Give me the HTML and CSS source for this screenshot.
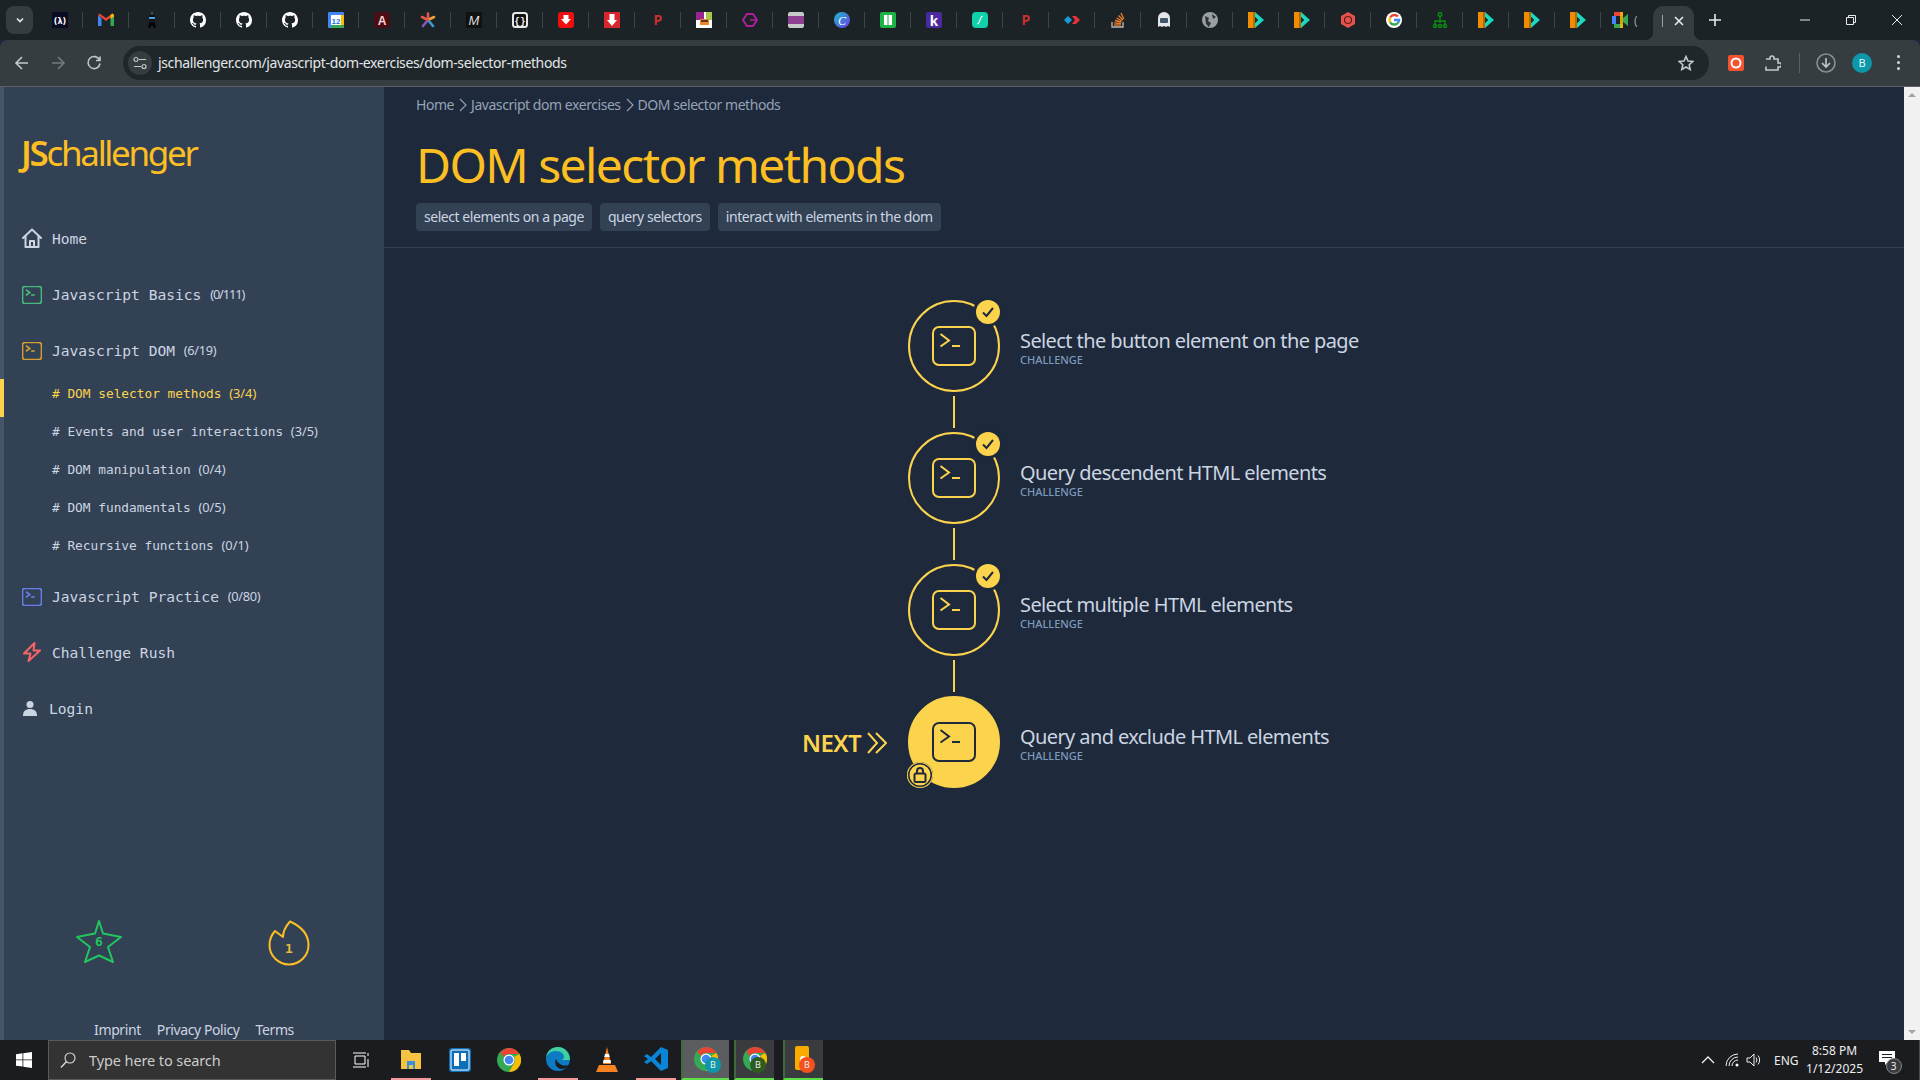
FILE: index.html
```html
<!DOCTYPE html>
<html>
<head>
  <meta charset="UTF-8">
  <title>DOM selector methods</title>
  <link rel="stylesheet" href="styles.css">
</head>
<body>
  <svg class="defs" width="0" height="0">
    <symbol id="term" viewBox="0 0 44 40">
      <rect x="1" y="1" width="42" height="38" rx="6" fill="none"/>
      <polyline points="8.5,8 17,14.5 8.5,20.5" fill="none"/>
      <line x1="20" y1="20" x2="28" y2="20"/>
    </symbol>
    <symbol id="gh" viewBox="0 0 16 16">
      <path fill="#fff" d="M8 0C3.58 0 0 3.58 0 8c0 3.54 2.29 6.53 5.47 7.59.4.07.55-.17.55-.38 0-.19-.01-.82-.01-1.49-2.01.37-2.53-.49-2.69-.94-.09-.23-.48-.94-.82-1.13-.28-.15-.68-.52-.01-.53.63-.01 1.08.58 1.23.82.72 1.21 1.87.87 2.33.66.07-.52.28-.87.51-1.07-1.78-.2-3.64-.89-3.64-3.95 0-.87.31-1.59.82-2.15-.08-.2-.36-1.02.08-2.12 0 0 .67-.21 2.2.82.64-.18 1.32-.27 2-.27s1.36.09 2 .27c1.53-1.04 2.2-.82 2.2-.82.44 1.1.16 1.92.08 2.12.51.56.82 1.27.82 2.15 0 3.07-1.87 3.75-3.65 3.95.29.25.54.73.54 1.48 0 1.07-.01 1.93-.01 2.2 0 .21.15.46.55.38A8.01 8.01 0 0 0 16 8c0-4.42-3.58-8-8-8z"/>
    </symbol>
    <symbol id="play" viewBox="0 0 16 16">
      <rect x="0" y="0" width="7" height="16" fill="#f08c00"/>
      <rect x="5" y="0" width="2" height="16" fill="#b86a00"/>
      <polygon points="7,0 16,8 7,16 7,11 10,8 7,5" fill="#1fd6c0"/>
      <polygon points="7,5 10,8 7,11" fill="#12302f"/>
    </symbol>
    <symbol id="arrow" viewBox="0 0 16 16">
      <rect width="16" height="16" rx="3" fill="#ee0f0f"/>
      <polygon points="5.5,3 10.5,3 10.5,7 13,7 8,12.5 3,7 5.5,7" fill="#fff"/>
    </symbol>
    <symbol id="chev" viewBox="0 0 8 14">
      <polyline points="1,1 7,7 1,13" fill="none" stroke="#94a3b8" stroke-width="1.1"/>
    </symbol>
  </svg>

  <div class="tabstrip">
    <div class="tabsearch"><svg width="12" height="12" viewBox="0 0 12 12"><polyline points="3,4.5 6,7.5 9,4.5" class="ln"/></svg></div>
    <div class="favs">
      <span class="fav"><svg width="16" height="16"><rect width="16" height="16" fill="#0a0a23"/><text x="8" y="12" text-anchor="middle" class="fav-t">(λ)</text></svg></span>
      <span class="fav"><svg width="16" height="16" viewBox="0 0 16 16"><path d="M0 3v11h3.5V6.5z" fill="#4285f4"/><path d="M16 3v11h-3.5V6.5z" fill="#34a853"/><path d="M0 3l8 6 8-6-1.5-1.5L8 6 1.5 1.500z" fill="#ea4335"/><path d="M12.5 3v4L16 4.5V3l-1.5-1.5z" fill="#fbbc04"/></svg></span>
      <span class="fav"><svg width="16" height="16" viewBox="0 0 16 16"><line x1="8" y1="0" x2="8" y2="3" stroke="#777"/><circle cx="8" cy="6" r="3.5" fill="#111"/><rect x="5" y="5" width="6" height="2" fill="#4aa3e0"/><path d="M5 10h6l1 6h-2l-2-3-2 3H4z" fill="#050505"/></svg></span>
      <span class="fav"><svg width="16" height="16"><use href="#gh"/></svg></span>
      <span class="fav"><svg width="16" height="16"><use href="#gh"/></svg></span>
      <span class="fav"><svg width="16" height="16"><use href="#gh"/></svg></span>
      <span class="fav"><svg width="16" height="16" viewBox="0 0 16 16"><rect width="16" height="16" rx="1" fill="#4285f4"/><rect x="3" y="3" width="10" height="10" fill="#fff"/><rect x="13" y="3" width="3" height="10" fill="#fbbc04"/><rect x="3" y="13" width="13" height="3" fill="#34a853"/><text x="8" y="11.5" text-anchor="middle" class="fav-cal">12</text></svg></span>
      <span class="fav"><svg width="16" height="16"><rect width="16" height="16" rx="3" fill="#4a0d14"/><text x="8" y="13" text-anchor="middle" class="fav-a">A</text></svg></span>
      <span class="fav"><svg width="16" height="16" viewBox="0 0 16 16" stroke-width="2.6" stroke-linecap="round"><line x1="8" y1="1.5" x2="8" y2="8" stroke="#e2574c"/><line x1="8" y1="8" x2="14" y2="5" stroke="#f0a030"/><line x1="8" y1="8" x2="13" y2="14" stroke="#3b9ed0"/><line x1="8" y1="8" x2="3" y2="14" stroke="#7c5cc4"/><line x1="8" y1="8" x2="2" y2="5" stroke="#e2574c"/></svg></span>
      <span class="fav"><svg width="16" height="16"><rect width="16" height="16" rx="1" fill="#111"/><text x="8" y="13" text-anchor="middle" class="fav-m">M</text></svg></span>
      <span class="fav"><svg width="16" height="16"><rect x="1" y="1" width="14" height="14" rx="2.5" fill="#111" stroke="#e8e8e8" stroke-width="2"/><text x="8" y="11.5" text-anchor="middle" class="fav-b">{}</text></svg></span>
      <span class="fav"><svg width="16" height="16" viewBox="0 0 16 16"><use href="#arrow"/></svg></span>
      <span class="fav"><svg width="16" height="16" viewBox="0 0 16 16"><rect width="16" height="16" fill="#d8262c"/><polygon points="5.5,2 10.5,2 10.5,8 13,8 8,14 3,8 5.5,8" fill="#fff"/></svg></span>
      <span class="fav"><svg width="16" height="16"><text x="8" y="13" text-anchor="middle" class="fav-p">P</text></svg></span>
      <span class="fav"><svg width="16" height="16" viewBox="0 0 16 16"><rect width="16" height="16" fill="#fff"/><rect x="0" y="0" width="8" height="8" fill="#98268f"/><rect x="10" y="0" width="6" height="8" fill="#a6c94b"/><rect x="4" y="7" width="9" height="6" fill="#f0872c"/><rect x="5" y="8" width="7" height="2" fill="#5c3a21"/></svg></span>
      <span class="fav"><svg width="16" height="16" viewBox="0 0 16 16"><polygon points="5,2 11,2 15,8 11,14 5,14 1,8" fill="none" stroke="#b01e9a" stroke-width="2"/><line x1="8" y1="8" x2="15" y2="8" stroke="#b01e9a" stroke-width="1.5"/></svg></span>
      <span class="fav"><svg width="16" height="16" viewBox="0 0 16 16"><rect width="16" height="16" rx="2" fill="#c8c8c8"/><rect y="4" width="16" height="8" fill="#8e3f92"/></svg></span>
      <span class="fav"><svg width="16" height="16" viewBox="0 0 16 16"><defs><linearGradient id="cv" x1="0" y1="0" x2="1" y2="1"><stop offset="0" stop-color="#16c1d0"/><stop offset="1" stop-color="#6c3be4"/></linearGradient></defs><circle cx="8" cy="8" r="8" fill="url(#cv)"/><text x="8" y="12.5" text-anchor="middle" class="fav-c">C</text></svg></span>
      <span class="fav"><svg width="16" height="16" viewBox="0 0 16 16"><rect width="16" height="16" rx="2" fill="#1db446"/><rect x="4" y="3" width="8" height="10" fill="#fff"/><line x1="8" y1="3" x2="8" y2="13" stroke="#1db446"/></svg></span>
      <span class="fav"><svg width="16" height="16"><rect width="16" height="16" rx="2" fill="#4a2aa0"/><text x="8" y="13.5" text-anchor="middle" class="fav-k">k</text></svg></span>
      <span class="fav"><svg width="16" height="16" viewBox="0 0 16 16"><rect width="16" height="16" rx="4" fill="#0fd1ac"/><path d="M5 12c2 0 2-1.500 3-4s1-4 3-4" fill="none" stroke="#fff" stroke-width="1.200"/></svg></span>
      <span class="fav"><svg width="16" height="16"><text x="8" y="13" text-anchor="middle" class="fav-p">P</text></svg></span>
      <span class="fav"><svg width="16" height="16" viewBox="0 0 16 16"><polygon points="0,8 4,4 8,8 4,12" fill="#1a9ad6"/><polygon points="4,4 8,4 12,4 16,8 12,12 8,12 11,8 8,4" fill="#e8303a"/></svg></span>
      <span class="fav"><svg width="16" height="16" viewBox="0 0 16 16" fill="none"><path d="M2 10v5h11v-5" stroke="#bcbbbb" stroke-width="1.300"/><g stroke="#f48024" stroke-width="1.300"><line x1="4" y1="13" x2="11" y2="13"/><line x1="4.200" y1="10.800" x2="11" y2="11.500"/><line x1="5" y1="8.500" x2="11.300" y2="10"/><line x1="6.500" y1="6" x2="12" y2="9"/><line x1="8.500" y1="3.500" x2="13" y2="8"/><line x1="11" y1="1" x2="13.800" y2="7"/></g></svg></span>
      <span class="fav"><svg width="16" height="16" viewBox="0 0 16 16"><path d="M2 15V6a6 6 0 0 1 12 0v9l-2-1-2 1-2-1-2 1-2-1z" fill="#e6e6e6"/><rect x="4" y="6" width="8" height="5" rx="1" fill="#44566c"/></svg></span>
      <span class="fav"><svg width="16" height="16" viewBox="0 0 16 16"><circle cx="8" cy="8" r="8" fill="#9a9fa3"/><path d="M3 4l4 2-1 3 3 2-2 4-3-3zM10 2l4 3-3 2z" fill="#2c3438"/></svg></span>
      <span class="fav"><svg width="16" height="16"><use href="#play"/></svg></span>
      <span class="fav"><svg width="16" height="16"><use href="#play"/></svg></span>
      <span class="fav"><svg width="16" height="16" viewBox="0 0 16 16"><polygon points="8,0 15,4 15,12 8,16 1,12 1,4" fill="#e5534b"/><circle cx="8" cy="8" r="3.500" fill="none" stroke="#5c1d1a" stroke-width="1.200"/></svg></span>
      <span class="fav"><svg width="16" height="16" viewBox="0 0 16 16"><circle cx="8" cy="8" r="8" fill="#fff"/><g fill="none" stroke-width="2.400"><path d="M12 4.400A5 5 0 0 0 4.200 5.500" stroke="#ea4335"/><path d="M4.200 5.500a5 5 0 0 0 0 5" stroke="#fbbc04"/><path d="M4.200 10.500A5 5 0 0 0 12.600 10" stroke="#34a853"/><path d="M12.600 10c.3-.6.4-1.300.4-2H8" stroke="#4285f4"/></g></svg></span>
      <span class="fav"><svg width="16" height="16" viewBox="0 0 16 16" fill="none" stroke="#0c8a12" stroke-width="1.500"><circle cx="8" cy="2.500" r="1.800"/><line x1="8" y1="4" x2="8" y2="11"/><path d="M3 13V9h10v4"/><circle cx="3" cy="14" r="1.500"/><circle cx="13" cy="14" r="1.500"/><circle cx="8" cy="14" r="1.500"/></svg></span>
      <span class="fav"><svg width="16" height="16"><use href="#play"/></svg></span>
      <span class="fav"><svg width="16" height="16"><use href="#play"/></svg></span>
      <span class="fav"><svg width="16" height="16"><use href="#play"/></svg></span>
    </div>
    <div class="meet">
      <svg width="16" height="16" viewBox="0 0 16 16"><rect x="0" y="4" width="4" height="8" fill="#4285f4"/><rect x="2" y="0" width="9" height="4" fill="#ea4335"/><rect x="2" y="12" width="9" height="4" fill="#34a853"/><rect x="8" y="0" width="3" height="16" fill="#fbbc04" opacity=".85"/><polygon points="11,6 16,2 16,14 11,10" fill="#34a853"/></svg>
      <span class="meet-cut">(</span>
    </div>
    <div class="tab-active">
      <span class="tab-bar"></span>
      <svg width="12" height="12" viewBox="0 0 12 12"><path d="M2 2l8 8M10 2l-8 8" class="ln"/></svg>
    </div>
    <div class="newtab"><svg width="14" height="14" viewBox="0 0 14 14"><path d="M7 1v12M1 7h12" class="ln"/></svg></div>
    <div class="winctl">
      <span><svg width="10" height="10" viewBox="0 0 10 10"><line x1="0" y1="5" x2="10" y2="5" class="ln1"/></svg></span>
      <span><svg width="10" height="10" viewBox="0 0 10 10"><path d="M.5 2.500h7v7h-7zM2.500 2.500v-2h7v7h-2" class="ln1"/></svg></span>
      <span><svg width="10" height="10" viewBox="0 0 10 10"><path d="M0 0l10 10M10 0L0 10" class="ln1"/></svg></span>
    </div>
  </div>

  <div class="toolbar">
    <svg class="navbtn" width="16" height="16" viewBox="0 0 16 16"><path d="M14 8H2.500M8 2L2 8l6 6" class="ln2"/></svg>
    <svg class="navbtn dim" width="16" height="16" viewBox="0 0 16 16"><path d="M2 8h11.500M8 2l6 6-6 6" class="ln2"/></svg>
    <svg class="navbtn" width="16" height="16" viewBox="0 0 16 16"><path d="M13.500 5A6 6 0 1 0 14 8.500M14 1.500V5.500H10" class="ln2"/></svg>
    <div class="omnibox">
      <span class="siteinfo"><svg width="14" height="14" viewBox="0 0 14 14"><path d="M6 3.500h7M1 10.500h7" class="ln2"/><circle cx="3" cy="3.500" r="2" class="ln2"/><circle cx="11" cy="10.500" r="2" class="ln2"/></svg></span>
      <span class="url">jschallenger.com/javascript-dom-exercises/dom-selector-methods</span>
      <svg class="urlstar" width="16" height="16" viewBox="0 0 16 16"><polygon points="8,1.500 10,6 14.800,6.500 11.200,9.700 12.200,14.500 8,12 3.800,14.500 4.800,9.700 1.200,6.500 6,6" class="ln2"/></svg>
    </div>
    <svg class="ext ext-rec" width="16" height="16" viewBox="0 0 16 16"><rect width="16" height="16" rx="2" fill="#f4512c"/><circle cx="8" cy="8" r="4.500" fill="none" stroke="#fff" stroke-width="2"/></svg>
    <svg class="ext ext-puzzle" width="16" height="16" viewBox="0 0 16 16"><path d="M1 4h4V3a2 2 0 0 1 4 0v1h4v4h1.500a2 2 0 0 1 0 4H13v3H1v-3.500" class="ln2"/></svg>
    <span class="tool-sep"></span>
    <svg class="ext ext-down" width="20" height="20" viewBox="0 0 20 20"><circle cx="10" cy="10" r="9" class="ln3"/><path d="M10 5v9M6 10l4 4 4-4" class="ln2"/></svg>
    <span class="avatar">B</span>
    <span class="dots"><i></i><i></i><i></i></span>
  </div>

  <div class="page">
    <aside class="sidebar">
      <a class="logo"><b>JS</b>challenger</a>
      <nav class="nav">
        <a class="nav-item"><svg class="nav-ico" width="20" height="20" viewBox="0 0 20 20"><path d="M1 10L10 1.500 19 10M3.500 8v11h13V8M8 19v-6h4v6" class="home-ln"/></svg>Home</a>
        <a class="nav-item"><svg class="nav-ico term green" width="20" height="18"><use href="#term"/></svg>Javascript Basics <span class="count tight">(0/111)</span></a>
        <a class="nav-item"><svg class="nav-ico term amber" width="20" height="18"><use href="#term"/></svg>Javascript DOM <span class="count">(6/19)</span></a>
        <a class="sub-item active"># DOM selector methods <span class="count">(3/4)</span></a>
        <a class="sub-item"># Events and user interactions <span class="count">(3/5)</span></a>
        <a class="sub-item"># DOM manipulation <span class="count">(0/4)</span></a>
        <a class="sub-item"># DOM fundamentals <span class="count">(0/5)</span></a>
        <a class="sub-item"># Recursive functions <span class="count">(0/1)</span></a>
        <a class="nav-item"><svg class="nav-ico term indigo" width="20" height="18"><use href="#term"/></svg>Javascript Practice <span class="count">(0/80)</span></a>
        <a class="nav-item"><svg class="nav-ico" width="20" height="20" viewBox="0 0 20 20"><path d="M12.500 1L2 11.500h6.500L6.500 19 18 8.500h-6.500z" class="bolt-ln"/></svg>Challenge Rush</a>
        <a class="nav-item login"><svg class="login-ico" width="14" height="15" viewBox="0 0 14 15"><circle cx="7" cy="3.500" r="3.500" fill="#cbd5e1"/><path d="M0 15c0-5 2.500-7 7-7s7 2 7 7z" fill="#cbd5e1"/></svg>Login</a>
      </nav>
      <div class="scores">
        <svg class="score-star" width="46" height="45" viewBox="0 0 46 45"><polygon points="23,2 27,14.500 45,18 32,28 37,43 23,36.500 9,43 14,28 1,18 19,14.500" class="star-ln"/><text x="23" y="27" text-anchor="middle" class="star-num">6</text></svg>
        <svg class="score-flame" width="42" height="46" viewBox="0 0 42 46"><path d="M22 1.500C32 6 40.500 14 40.500 25A19.500 19.500 0 0 1 1.500 25C1.500 19 3.500 15 7 11L15 17C15 11 18 6 22 1.500Z" class="flame-ln"/><text x="21" y="33" text-anchor="middle" class="flame-num">1</text></svg>
      </div>
      <div class="legal"><a>Imprint</a><a>Privacy Policy</a><a>Terms</a></div>
    </aside>

    <main class="main">
      <header class="head">
        <div class="crumbs">Home<svg class="sep" width="8" height="14"><use href="#chev"/></svg>Javascript dom exercises<svg class="sep" width="8" height="14"><use href="#chev"/></svg>DOM selector methods</div>
        <h1 class="title">DOM selector methods</h1>
        <div class="tags">
          <span class="tag">select elements on a page</span>
          <span class="tag">query selectors</span>
          <span class="tag">interact with elements in the dom</span>
        </div>
      </header>

      <section class="steps">
        <div class="step">
          <div class="node"><svg class="term" width="44" height="40"><use href="#term"/></svg><span class="check"><svg width="14" height="14" viewBox="0 0 14 14"><polyline points="2,7.500 5.500,11 12,3" class="check-ln"/></svg></span></div>
          <div class="step-text"><div class="step-title">Select the button element on the page</div><div class="step-kind">CHALLENGE</div></div>
        </div>
        <div class="link"></div>
        <div class="step">
          <div class="node"><svg class="term" width="44" height="40"><use href="#term"/></svg><span class="check"><svg width="14" height="14" viewBox="0 0 14 14"><polyline points="2,7.500 5.500,11 12,3" class="check-ln"/></svg></span></div>
          <div class="step-text"><div class="step-title">Query descendent HTML elements</div><div class="step-kind">CHALLENGE</div></div>
        </div>
        <div class="link"></div>
        <div class="step">
          <div class="node"><svg class="term" width="44" height="40"><use href="#term"/></svg><span class="check"><svg width="14" height="14" viewBox="0 0 14 14"><polyline points="2,7.500 5.500,11 12,3" class="check-ln"/></svg></span></div>
          <div class="step-text"><div class="step-title">Select multiple HTML elements</div><div class="step-kind">CHALLENGE</div></div>
        </div>
        <div class="link"></div>
        <div class="step">
          <div class="node current">
            <span class="next">NEXT<svg width="20" height="22" viewBox="0 0 20 22"><path d="M1 1l9 10-9 10M9 1l10 10-10 10" class="next-ln"/></svg></span>
            <svg class="term" width="44" height="40"><use href="#term"/></svg>
            <span class="lock"><svg width="14" height="16" viewBox="0 0 14 16"><rect x="1.500" y="6.500" width="11" height="8.500" rx="1.500" class="lock-ln"/><path d="M4 6.500V4a3 3 0 0 1 6 0v2.500" class="lock-ln"/></svg></span>
          </div>
          <div class="step-text"><div class="step-title">Query and exclude HTML elements</div><div class="step-kind">CHALLENGE</div></div>
        </div>
      </section>
    </main>

    <div class="scrollbar">
      <svg width="16" height="16" viewBox="0 0 16 16"><polygon points="8,6 12,10 4,10" fill="#a3a3a3"/></svg>
      <svg width="16" height="16" viewBox="0 0 16 16"><polygon points="8,10 12,6 4,6" fill="#a3a3a3"/></svg>
    </div>
  </div>

  <div class="taskbar">
    <div class="start"><svg width="16" height="16" viewBox="0 0 16 16"><path d="M0 2.200l6.500-.9v6.200H0zM7.300 1.200L16 0v7.500H7.300zM0 8.300h6.500v6.300L0 13.700zM7.300 8.300H16V16l-8.700-1.200z" fill="#fff"/></svg></div>
    <div class="search"><svg width="16" height="16" viewBox="0 0 16 16"><circle cx="10" cy="6" r="5" fill="none" stroke="#ddd" stroke-width="1.100"/><line x1="6.500" y1="9.500" x2="1" y2="15.500" stroke="#ddd" stroke-width="1.300"/></svg><span>Type here to search</span></div>
    <div class="taskview"><svg width="16" height="16" viewBox="0 0 16 16"><path d="M2 4h10v8H2zM0 1h13M0 15h13M15 1v3M15 7v8" fill="none" stroke="#fff"/></svg></div>
    <div class="apps">
      <span class="app u-pink"><svg width="24" height="24" viewBox="0 0 24 24"><path d="M2 3h8l2 3h10v16H2z" fill="#f5c242"/><rect x="8" y="14" width="8" height="8" fill="#3a8fd9"/><rect x="10" y="18" width="4" height="4" fill="#f5c242"/></svg></span>
      <span class="app"><svg width="22" height="24" viewBox="0 0 22 24"><rect width="22" height="24" rx="3" fill="#0a6fb8"/><rect x="2" y="2" width="18" height="20" rx="1" fill="#0a6fb8" stroke="#fff"/><rect x="5" y="5" width="5" height="13" fill="#fff"/><rect x="12" y="5" width="5" height="8" fill="#fff"/></svg></span>
      <span class="app"><svg class="chrome-ic" width="24" height="24" viewBox="0 0 24 24"><circle cx="12" cy="12" r="12" fill="#34a853"/><path d="M12 0a12 12 0 0 1 10.400 6H12a6 6 0 0 0-5.200 3L3.400 4.500A12 12 0 0 1 12 0z" fill="#ea4335"/><path d="M22.400 6A12 12 0 0 1 12 24l5.200-9a6 6 0 0 0 0-6z" fill="#fbbc04"/><circle cx="12" cy="12" r="5.500" fill="#fff"/><circle cx="12" cy="12" r="4.300" fill="#4285f4"/></svg></span>
      <span class="app u-pink"><svg width="24" height="24" viewBox="0 0 24 24"><circle cx="12" cy="12" r="12" fill="#0c7bc4"/><path d="M24 13c0-7-5-13-12-13C6 0 1 4 0 10c2-4 6-6 10-6 5 0 8 3 8 6 0 2-2 3-3 3z" fill="#3dd0a0"/><path d="M10 12c-2 4 0 9 5 10 4 0 7-2 9-5-3 2-7 2-10 0-2-1-3-3-4-5z" fill="#1a1c20"/></svg></span>
      <span class="app"><svg width="22" height="26" viewBox="0 0 22 26"><polygon points="11,0 15,17 7,17" fill="#f58220"/><polygon points="9,7 13,7 13.800,10 8.200,10" fill="#fff"/><polygon points="7.500,13 14.500,13 15,16 7,16" fill="#fff"/><polygon points="3,18 19,18 22,25 0,25" fill="#f58220"/></svg></span>
      <span class="app u-pink"><svg width="24" height="24" viewBox="0 0 24 24"><path d="M17 0l7 3v18l-7 3L7 14l-4 3-3-2 4-3-4-3 3-2 4 3z" fill="#0a84d6"/><path d="M17 6v12l-6-6z" fill="#1a1c20"/></svg></span>
      <span class="app open hi"><svg class="chrome-ic" width="24" height="24" viewBox="0 0 24 24"><circle cx="12" cy="12" r="12" fill="#34a853"/><path d="M12 0a12 12 0 0 1 10.400 6H12a6 6 0 0 0-5.200 3L3.400 4.500A12 12 0 0 1 12 0z" fill="#ea4335"/><path d="M22.400 6A12 12 0 0 1 12 24l5.200-9a6 6 0 0 0 0-6z" fill="#fbbc04"/><circle cx="12" cy="12" r="5.500" fill="#fff"/><circle cx="12" cy="12" r="4.300" fill="#4285f4"/></svg><span class="appbadge teal">B</span></span>
      <span class="app open"><svg class="chrome-ic" width="24" height="24" viewBox="0 0 24 24"><circle cx="12" cy="12" r="12" fill="#34a853"/><path d="M12 0a12 12 0 0 1 10.400 6H12a6 6 0 0 0-5.200 3L3.400 4.500A12 12 0 0 1 12 0z" fill="#ea4335"/><path d="M22.400 6A12 12 0 0 1 12 24l5.200-9a6 6 0 0 0 0-6z" fill="#fbbc04"/><circle cx="12" cy="12" r="5.500" fill="#fff"/><circle cx="12" cy="12" r="4.300" fill="#4285f4"/></svg><span class="appbadge olive">B</span></span>
      <span class="app open last"><svg width="22" height="26" viewBox="0 0 22 26"><rect x="2" width="14" height="24" rx="2" fill="#f9ab00"/><circle cx="10" cy="13" r="3" fill="#fff"/></svg><span class="appbadge orange">B</span></span>
    </div>
    <div class="tray">
      <svg class="tray-caret" width="14" height="8" viewBox="0 0 14 8"><polyline points="1,7 7,1 13,7" class="tray-ln"/></svg>
      <svg class="tray-wifi" width="16" height="14" viewBox="0 0 16 14"><path d="M1 13A12 12 0 0 1 13 1M4 13a9 9 0 0 1 9-9M7 13a6 6 0 0 1 6-6" class="tray-thin"/><circle cx="12" cy="12" r="1.500" fill="#fff"/></svg>
      <svg class="tray-vol" width="16" height="14" viewBox="0 0 16 14"><path d="M1 5h3l4-4v12l-4-4H1zM10 4.500a4 4 0 0 1 0 5M12 2.500a7 7 0 0 1 0 9" class="tray-thin"/></svg>
      <span class="tray-lang">ENG</span>
      <div class="clock"><div>8:58 PM</div><div>1/12/2025</div></div>
      <div class="notif"><svg width="16" height="14" viewBox="0 0 16 14"><path d="M0 0h16v11H9l-3 3v-3H0z" fill="#fff"/><path d="M3 3.500h10M3 6.500h10" stroke="#1a1c20"/></svg><span class="notif-n">3</span></div>
    </div>
  </div>
</body>
</html>
```

FILE: styles.css
```css
* {
  box-sizing: border-box;
}

html, body {
  margin: 0;
  width: 1920px;
  height: 1080px;
  overflow: hidden;
}

body {
  display: flex;
  flex-direction: column;
  font-family: "Noto Sans", "Open Sans", sans-serif;
  background: #1e293b;
}

.defs {
  position: absolute;
}

svg {
  display: block;
  flex: none;
}

a {
  text-decoration: none;
}

.ln, .ln1, .ln2, .ln3 {
  fill: none;
  stroke: #e8eaec;
  stroke-width: 1.6;
}

.ln1 {
  stroke-width: 1;
}

.ln2 {
  stroke: #c4c8cb;
  stroke-width: 1.6;
}

.ln3 {
  stroke: #8a8f92;
  stroke-width: 1.6;
}

.fav-t { font: bold 8px "DejaVu Sans", sans-serif; fill: #fff; }
.fav-cal { font: bold 8px "Liberation Sans", sans-serif; fill: #1a73e8; }
.fav-a { font: bold 12px "Liberation Sans", sans-serif; fill: #f5d5d5; }
.fav-m { font: italic 13px "Liberation Sans", sans-serif; fill: #ddd; }
.fav-b { font: bold 9px "Liberation Mono", monospace; fill: #fff; }
.fav-c { font: italic 12px "Liberation Serif", serif; fill: #fff; }
.fav-k { font: bold 15px "Liberation Sans", sans-serif; fill: #fff; }
.fav-p { font: bold 14px "Liberation Mono", monospace; fill: #c9302c; }

/* browser chrome */
.tabstrip {
  height: 40px;
  flex: none;
  display: flex;
  align-items: center;
  background: #1b2327;
  color: #e8eaec;
}

.tabsearch {
  width: 27px;
  height: 28px;
  margin-left: 6px;
  margin-right: 4px;
  border-radius: 8px;
  background: #353d41;
  display: flex;
  align-items: center;
  justify-content: center;
}

.favs {
  display: flex;
}

.fav {
  width: 46px;
  height: 16px;
  padding-left: 15px;
  border-right: 1px solid #3c4448;
}

.meet {
  width: 52px;
  display: flex;
  align-items: center;
  gap: 6px;
  padding-left: 11px;
  font-size: 12px;
  color: #9aa0a3;
}

.tab-active {
  position: relative;
  align-self: flex-end;
  width: 41px;
  height: 34px;
  background: #353d41;
  border-radius: 10px 10px 0 0;
  display: flex;
  align-items: center;
  padding: 0 0 4px 9px;
  gap: 10px;
}

.tab-active::before,
.tab-active::after {
  content: "";
  position: absolute;
  bottom: 0;
  width: 8px;
  height: 8px;
}

.tab-active::before {
  left: -8px;
  background: radial-gradient(circle at 0 0, transparent 8px, #353d41 8.5px);
}

.tab-active::after {
  right: -8px;
  background: radial-gradient(circle at 100% 0, transparent 8px, #353d41 8.5px);
}

.tab-bar {
  width: 1px;
  height: 12px;
  background: #9aa0a3;
}

.newtab {
  margin-left: 14px;
}

.winctl {
  margin-left: auto;
  display: flex;
}

.winctl span {
  width: 46px;
  height: 30px;
  display: flex;
  align-items: center;
  justify-content: center;
}

.toolbar {
  height: 47px;
  flex: none;
  display: flex;
  align-items: center;
  padding: 0 0 1px 14px;
  background: #353d41;
  border-bottom: 1px solid #5b6164;
  border-radius: 8px 8px 0 0;
}

.navbtn {
  margin-right: 20px;
}

.navbtn.dim path {
  stroke: #747a7d;
}

.omnibox {
  width: 1586px;
  height: 34px;
  margin-left: 1px;
  border-radius: 17px;
  background: #1f272a;
  display: flex;
  align-items: center;
  padding-left: 5px;
}

.siteinfo {
  width: 24px;
  height: 24px;
  border-radius: 50%;
  background: #353d41;
  display: flex;
  align-items: center;
  justify-content: center;
}

.siteinfo .ln2 {
  stroke-width: 1.2;
}

.url {
  margin-left: 6px;
  font-size: 14px;
  letter-spacing: -0.37px;
  color: #e3e6e8;
}

.urlstar {
  margin-left: auto;
  margin-right: 15px;
}

.ext-rec {
  margin-left: 19px;
}

.ext-puzzle {
  margin-left: 21px;
}

.tool-sep {
  width: 1px;
  height: 20px;
  margin-left: 18px;
  background: #5b6164;
}

.ext-down {
  margin-left: 16px;
}

.avatar {
  width: 20px;
  height: 20px;
  margin-left: 16px;
  border-radius: 50%;
  background: #0e97a8;
  color: #dff;
  font-size: 11px;
  text-align: center;
  line-height: 20px;
}

.dots {
  margin-left: 25px;
  display: flex;
  flex-direction: column;
  gap: 3px;
}

.dots i {
  width: 3px;
  height: 3px;
  border-radius: 50%;
  background: #d4d7d9;
}

/* page */
.page {
  height: 953px;
  flex: none;
  display: flex;
  overflow: hidden;
}

.sidebar {
  width: 384px;
  flex: none;
  display: flex;
  flex-direction: column;
  background: #334155;
  border-left: 4px solid #475569;
}

.logo {
  height: 124px;
  padding: 42px 0 0 17px;
  font-size: 35px;
  line-height: 48px;
  letter-spacing: -2.3px;
  color: #fbbf24;
}

.logo b {
  font-weight: 600;
}

.nav {
  display: flex;
  flex-direction: column;
}

.nav-item {
  height: 56px;
  display: flex;
  align-items: center;
  padding: 0 0 2px 18px;
  font: 14.6px "DejaVu Sans Mono", monospace;
  color: #cbd5e1;
  white-space: pre;
}

.nav-ico {
  margin-right: 10px;
}

.nav-ico.term {
  margin-top: 2px;
}

.login-ico {
  margin: 0 12px 0 1px;
}

.term {
  stroke: currentColor;
  stroke-width: 2;
  color: #fcd34d;
}

.term.green { color: #48bb78; stroke-width: 3.6; }
.term.amber { color: #d69e2e; stroke-width: 3.6; }
.term.indigo { color: #667eea; stroke-width: 3.6; }

.home-ln {
  fill: none;
  stroke: #cbd5e1;
  stroke-width: 2;
  stroke-linejoin: round;
  stroke-linecap: round;
}

.bolt-ln {
  fill: none;
  stroke: #f56565;
  stroke-width: 2;
  stroke-linejoin: round;
}

.count {
  font: 12.8px "Noto Sans", sans-serif;
  letter-spacing: -0.3px;
}

.count.tight {
  letter-spacing: -1.1px;
}

.sub-item {
  height: 38px;
  padding: 5px 0 0 48px;
  font: 12.8px "DejaVu Sans Mono", monospace;
  line-height: 14px;
  color: #cbd5e1;
  white-space: pre;
}

.sub-item .count {
  letter-spacing: 0;
}

.sub-item.active {
  margin-left: -4px;
  padding-left: 48px;
  border-left: 4px solid #fcd34d;
  color: #fcd34d;
}

.scores {
  height: 46px;
  margin-top: 183px;
  position: relative;
  display: flex;
  padding-left: 72px;
  gap: 146px;
}

.score-star { margin-top: -1px; }

.star-ln {
  fill: none;
  stroke: #22c55e;
  stroke-width: 2;
  stroke-linejoin: round;
}

.star-num {
  font: bold 13px "DejaVu Sans Mono", monospace;
  fill: #22c55e;
}

.flame-ln {
  fill: none;
  stroke: #fbbf24;
  stroke-width: 2;
  stroke-linejoin: round;
}

.flame-num {
  font: bold 13px "DejaVu Sans Mono", monospace;
  fill: #e6b93a;
}

.legal {
  margin-top: auto;
  height: 20px;
  display: flex;
  justify-content: center;
  gap: 16px;
  font-size: 14px;
  line-height: 20px;
  letter-spacing: -0.4px;
  color: #cbd5e1;
}

.main {
  flex: 1;
  min-width: 0;
}

.head {
  height: 161px;
  padding: 8px 0 0 32px;
  border-bottom: 1px solid #334155;
}

.crumbs {
  display: flex;
  align-items: center;
  font-size: 14px;
  line-height: 20px;
  letter-spacing: -0.45px;
  color: #94a3b8;
}

.sep {
  margin: 0 4px 0 5px;
}

.title {
  margin: 18px 0 0;
  font-size: 48px;
  font-weight: 400;
  line-height: 64px;
  letter-spacing: -1.6px;
  color: #fbbf24;
}

.tags {
  display: flex;
  gap: 8px;
  margin-top: 6px;
}

.tag {
  height: 28px;
  padding: 0 8px;
  border-radius: 4px;
  background: #334155;
  color: #cbd5e1;
  font-size: 14px;
  line-height: 28px;
  letter-spacing: -0.45px;
}

.steps {
  padding: 52px 0 0 524px;
}

.step {
  display: flex;
  align-items: center;
  gap: 20px;
}

.node {
  position: relative;
  width: 92px;
  height: 92px;
  border: 2px solid #fcd34d;
  border-radius: 50%;
  display: flex;
  align-items: center;
  justify-content: center;
}

.node.current {
  background: #fcd34d;
}

.node.current .term {
  color: #1e293b;
}

.check {
  position: absolute;
  left: 66px;
  top: -2px;
  width: 24px;
  height: 24px;
  border-radius: 50%;
  background: #fcd34d;
  box-shadow: 0 0 0 3px #1e293b;
  display: flex;
  align-items: center;
  justify-content: center;
}

.check-ln {
  fill: none;
  stroke: #1e293b;
  stroke-width: 2;
}

.lock {
  position: absolute;
  left: -3px;
  top: 64px;
  width: 26px;
  height: 26px;
  border-radius: 50%;
  background: #fcd34d;
  box-shadow: inset 0 0 0 1px #fcd34d, inset 0 0 0 2.5px #1e293b;
  display: flex;
  align-items: center;
  justify-content: center;
}

.lock-ln {
  fill: none;
  stroke: #1e293b;
  stroke-width: 2;
}

.next {
  position: absolute;
  right: 111px;
  top: 29px;
  display: flex;
  align-items: center;
  gap: 6px;
  font-size: 24px;
  font-weight: 600;
  line-height: 32px;
  letter-spacing: -0.6px;
  color: #fcd34d;
}

.next-ln {
  fill: none;
  stroke: #fcd34d;
  stroke-width: 2;
}

.link {
  width: 2px;
  height: 32px;
  margin: 4px 0 4px 45px;
  background: #fcd34d;
}

.step-text {
  padding-top: 3px;
}

.step-title {
  font-size: 20px;
  line-height: 24px;
  letter-spacing: -0.6px;
  color: #cbd5e1;
}

.step-kind {
  font-size: 11px;
  font-weight: 500;
  line-height: 13px;
  color: #7d9abb;
}

.scrollbar {
  width: 16px;
  flex: none;
  display: flex;
  flex-direction: column;
  justify-content: space-between;
  background: #f1f1f1;
}

/* taskbar */
.taskbar {
  height: 40px;
  flex: none;
  display: flex;
  align-items: center;
  background: #1a1c20;
  color: #fff;
}

.start {
  width: 48px;
  display: flex;
  justify-content: center;
}

.search {
  width: 288px;
  height: 40px;
  display: flex;
  align-items: center;
  gap: 13px;
  padding-left: 11px;
  background: #333;
  border: 1px solid #5a5a5a;
  font-size: 14.5px;
  letter-spacing: -0.1px;
  color: #ccc;
}

.taskview {
  width: 49px;
  display: flex;
  justify-content: center;
}

.apps {
  display: flex;
  height: 40px;
}

.app {
  position: relative;
  width: 40px;
  height: 40px;
  margin-left: 9px;
  display: flex;
  align-items: center;
  justify-content: center;
}

.app:first-child {
  margin-left: 6px;
}

.app.u-pink {
  border-bottom: 2px solid #f59a9a;
}

.app.open {
  margin-left: 5px;
  background: #3a3b3e;
  border-left: 2px solid #3f6b3a;
  border-bottom: 2px solid #5ede46;
}

.app.hi {
  width: 48px;
  background: #5c5d60;
}

.app.last {
  margin-left: 9px;
}

.appbadge {
  position: absolute;
  right: 8px;
  bottom: 5px;
  width: 16px;
  height: 16px;
  border-radius: 50%;
  font-size: 9px;
  line-height: 16px;
  text-align: center;
  color: #eee;
}

.appbadge.teal { background: #0e97a8; }
.appbadge.olive { background: #2f5b1f; }
.appbadge.orange { background: #f4511e; }

.tray {
  margin-left: auto;
  display: flex;
  align-items: center;
  height: 40px;
  position: relative;
  padding-right: 3px;
  border-right: 1px solid #4a4c50;
  width: 222px;
  font-size: 12px;
  color: #eee;
}

.tray-ln, .tray-thin {
  fill: none;
  stroke: #f0f0f0;
  stroke-width: 1.300;
}

.tray-thin {
  stroke-width: 1;
}

.tray-caret {
  margin-left: 3px;
}

.tray-wifi {
  margin-left: 10px;
}

.tray-vol {
  margin-left: 5px;
}

.tray-lang {
  margin-left: 12px;
}

.clock {
  margin-left: 6px;
  width: 60px;
  text-align: center;
  line-height: 18px;
}

.notif {
  position: relative;
  margin-left: 14px;
  margin-top: -4px;
}

.notif-n {
  position: absolute;
  left: 7px;
  top: 7px;
  width: 16px;
  height: 16px;
  border-radius: 50%;
  background: #3a3b3e;
  border: 1px solid #888;
  font-size: 10px;
  line-height: 14px;
  text-align: center;
}
```
